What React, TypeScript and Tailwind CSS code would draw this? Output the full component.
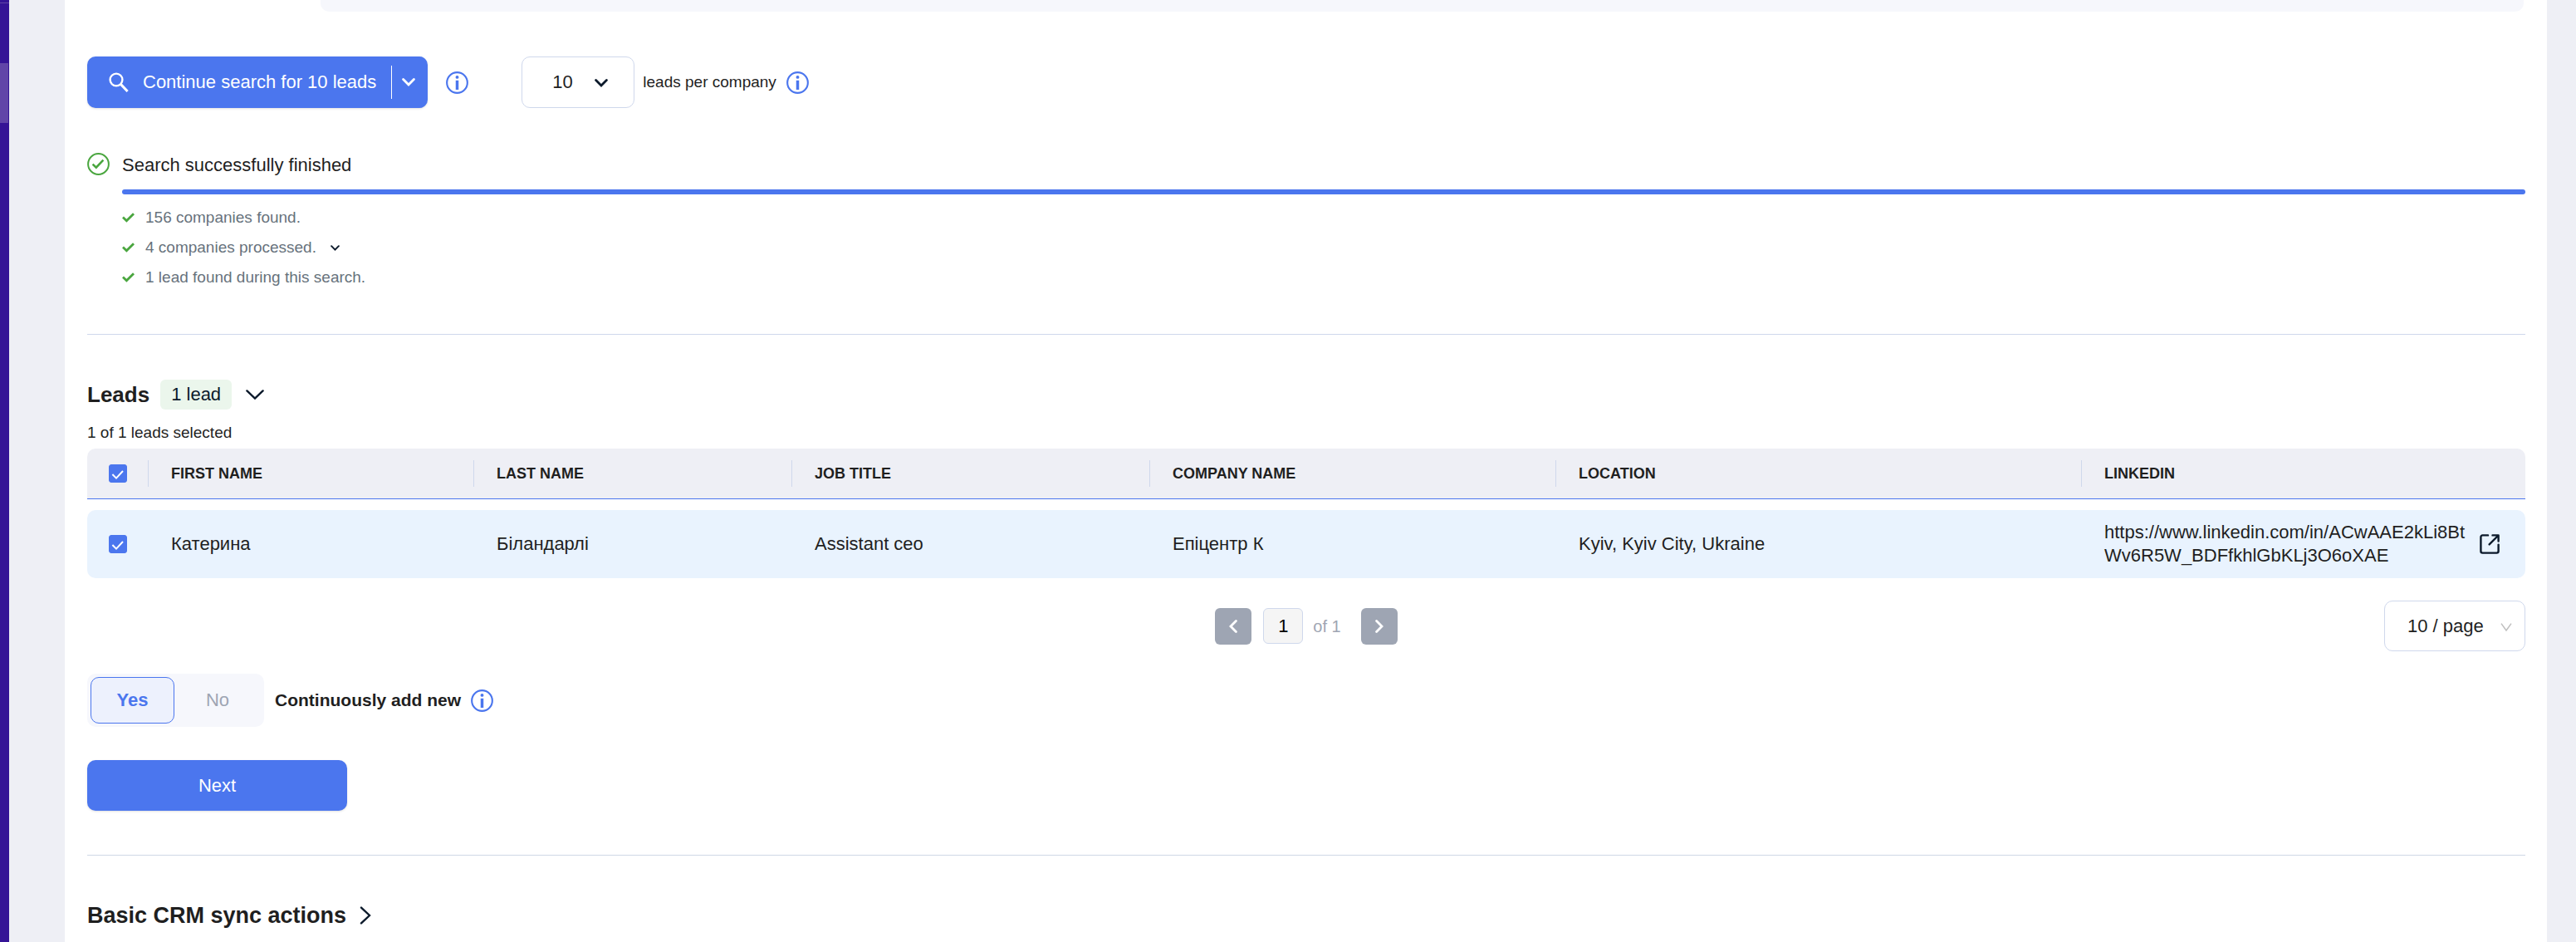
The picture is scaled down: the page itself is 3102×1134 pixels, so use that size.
import { useState } from 'react';
import type { ReactNode } from 'react';

interface Lead {
  firstName: string;
  lastName: string;
  jobTitle: string;
  company: string;
  location: string;
  linkedin: string;
}

const leads: Lead[] = [
  {
    firstName: 'Катерина',
    lastName: 'Біландарлі',
    jobTitle: 'Assistant ceo',
    company: 'Епіцентр К',
    location: 'Kyiv, Kyiv City, Ukraine',
    linkedin: 'https://www.linkedin.com/in/ACwAAE2kLi8BtWv6R5W_BDFfkhlGbKLj3O6oXAE',
  },
];

const columns = [
  { label: 'FIRST NAME', width: 'w-[392px]' },
  { label: 'LAST NAME', width: 'w-[383px]' },
  { label: 'JOB TITLE', width: 'w-[431px]' },
  { label: 'COMPANY NAME', width: 'w-[489px]' },
  { label: 'LOCATION', width: 'w-[633px]' },
  { label: 'LINKEDIN', width: '' },
];

function SearchIcon() {
  return (
    <svg className="h-6 w-6" viewBox="0 0 24 24" fill="none" stroke="currentColor" strokeWidth="2.4" aria-hidden="true">
      <circle cx="9" cy="9" r="7.4" />
      <path d="M14.4 14.4 22.6 23" strokeWidth="3" />
    </svg>
  );
}

function InfoIcon() {
  return (
    <svg className="h-[27px] w-[27px]" viewBox="0 0 28 28" fill="none" stroke="currentColor" aria-hidden="true">
      <circle cx="14" cy="14" r="12.8" strokeWidth="2.2" />
      <path d="M14 11.2v11.6" strokeWidth="3.6" />
      <circle cx="14" cy="7.2" r="2" fill="currentColor" stroke="none" />
    </svg>
  );
}

function InfoButton({ label }: { label: string }) {
  return (
    <button aria-label={label} className="text-[#4b76ee]">
      <InfoIcon />
    </button>
  );
}

function ChevronBold({ className }: { className: string }) {
  return (
    <svg className={className} viewBox="0 0 16 10" fill="none" stroke="currentColor" strokeWidth="2.8" strokeLinecap="round" aria-hidden="true">
      <path d="M1.6 1.6 8 8l6.4-6.4" />
    </svg>
  );
}

function TickIcon() {
  return (
    <svg className="h-3 w-[15px]" viewBox="0 0 15 12" fill="none" stroke="currentColor" strokeWidth="2.8" aria-hidden="true">
      <path d="M1 5.6l4.4 4.2L14 1.2" />
    </svg>
  );
}

function CircleTickIcon() {
  return (
    <svg className="h-[27px] w-[27px] text-[#4aa63f]" viewBox="0 0 27 27" fill="none" stroke="currentColor" aria-hidden="true">
      <circle cx="13.5" cy="13.5" r="12.4" strokeWidth="2" />
      <path d="M6.6 13.6l4.2 4L19.4 8.6" strokeWidth="2.6" />
    </svg>
  );
}

function ExternalIcon() {
  return (
    <svg className="h-6 w-6" viewBox="0 0 24 24" fill="none" stroke="currentColor" strokeWidth="2.4" strokeLinecap="round" strokeLinejoin="round" aria-hidden="true">
      <path d="M10 1.4H3.4a2 2 0 0 0-2 2v17.2a2 2 0 0 0 2 2h17.2a2 2 0 0 0 2-2V12.6" />
      <path d="M15.5 1.4h7.1v7.1M22 2 11.6 12.4" />
    </svg>
  );
}

function Checkbox({ label, checked, onChange }: { label: string; checked: boolean; onChange: () => void }) {
  return (
    <span className="relative mx-auto block h-[22px] w-[22px]">
      <input
        type="checkbox"
        aria-label={label}
        checked={checked}
        onChange={onChange}
        className="block h-[22px] w-[22px] appearance-none rounded-[3px] border border-[#4b76ee] bg-white checked:bg-[#4b76ee]"
      />
      <svg className="pointer-events-none absolute inset-0 h-[22px] w-[22px] text-white" viewBox="0 0 22 22" fill="none" stroke="currentColor" strokeWidth="2" aria-hidden="true">
        <path d="M4.4 12l4.6 4.6 8-8.6" />
      </svg>
    </span>
  );
}

function StatusLine({ children }: { children: ReactNode }) {
  return (
    <li className="flex h-9 items-center gap-[13px] text-[#67727c]">
      <span className="text-[#4aa63f]">
        <TickIcon />
      </span>
      {children}
    </li>
  );
}

export default function App() {
  const [selected, setSelected] = useState(true);
  const [continuous, setContinuous] = useState(true);
  const toggleSelected = () => setSelected(!selected);

  return (
    <div className="flex min-h-screen bg-[#eeeff5] font-['Liberation_Sans',Arial,sans-serif] text-[22px] leading-7 text-[#1f1f1f]">
      <aside className="w-[11px] shrink-0 bg-[#351496]">
        <div className="mt-[3px] h-px bg-[#6145a8]" />
        <div className="mt-[72px] mr-px h-[72px] bg-[#6145a8]" />
      </aside>

      <main className="mr-[35px] ml-[67px] min-w-0 grow bg-white pr-[26px] pl-[27px]">
        <div className="mr-[2px] ml-[281px] h-[14px] rounded-b-[10px] bg-[#f6f7fc]" />

        <section className="mt-[54px] flex h-[62px] items-center">
          <div className="flex h-full items-center rounded-[10px] bg-[#4b76ee] text-white shadow-sm">
            <button className="flex h-full items-center gap-[17px] pr-[18px] pl-[26px]">
              <SearchIcon />
              Continue search for 10 leads
            </button>
            <span className="h-10 w-px bg-white" />
            <button aria-label="Search options" className="flex h-full w-[43px] items-center pl-3">
              <ChevronBold className="h-[10px] w-4" />
            </button>
          </div>
          <div className="ml-[22px] flex">
            <InfoButton label="About search" />
          </div>
          <div className="relative ml-[64px] h-full">
            <select
              id="per-company"
              defaultValue="10"
              className="h-full w-[136px] appearance-none rounded-[10px] border border-[#cfd8ec] bg-white pl-[36px]"
            >
              <option>10</option>
              <option>20</option>
            </select>
            <ChevronBold className="pointer-events-none absolute top-[27px] right-8 h-[10px] w-4 text-[#0c1a2b]" />
          </div>
          <label htmlFor="per-company" className="mr-3 ml-[10px] text-[19px]">
            leads per company
          </label>
          <InfoButton label="About leads per company" />
        </section>

        <section className="mt-[54px] flex items-start gap-[15px]">
          <CircleTickIcon />
          <div className="grow">
            <p className="h-[44px] leading-[30px]">Search successfully finished</p>
            <div className="h-[6px] rounded-full bg-[#4b76ee]" />
            <ul className="mt-[10px] text-[19px]">
              <StatusLine>156 companies found.</StatusLine>
              <StatusLine>
                4 companies processed.
                <button aria-label="Show processed companies" className="ml-1 text-[#0c1a2b]">
                  <ChevronBold className="h-[7px] w-[11px]" />
                </button>
              </StatusLine>
              <StatusLine>1 lead found during this search.</StatusLine>
            </ul>
          </div>
        </section>

        <hr className="mt-[50px] border-[#cfd8ec]" />

        <section className="mt-[54px]">
          <div className="flex h-9 items-center">
            <h2 className="text-[26px] font-bold">Leads</h2>
            <span className="ml-[13px] rounded-md bg-[#ebf6ec] px-[13px] py-1 text-[#0c1a2b]">1 lead</span>
            <button aria-label="Toggle leads" className="ml-[17px]">
              <svg className="h-3 w-[22px] text-[#0c1a2b]" viewBox="0 0 22 12" fill="none" stroke="currentColor" strokeWidth="2.4" strokeLinecap="round">
                <path d="M1.4 1.4 11 10.6l9.6-9.2" />
              </svg>
            </button>
          </div>
          <p className="mt-[14px] h-[33px] text-[19px]">1 of 1 leads selected</p>

          <table className="w-full table-fixed border-separate border-spacing-0 text-left">
            <thead>
              <tr className="h-[61px]">
                <th className="w-[74px] rounded-tl-[10px] border-b border-[#4b76ee] bg-[#eeeff5] p-0">
                  <div className="flex h-8 items-center border-r border-[#cfd8ec]">
                    <Checkbox label="Select all leads" checked={selected} onChange={toggleSelected} />
                  </div>
                </th>
                {columns.map((column) => (
                  <th
                    key={column.label}
                    className={`${column.width} border-b border-[#4b76ee] bg-[#eeeff5] p-0 text-[18px] font-bold last:rounded-tr-[10px] [&:last-child>div]:border-r-0`}
                  >
                    <div className="flex h-8 items-center border-r border-[#cfd8ec] pl-[27px]">{column.label}</div>
                  </th>
                ))}
              </tr>
            </thead>
            <tbody>
              <tr className="h-[13px]" aria-hidden="true">
                <td colSpan={7} className="p-0" />
              </tr>
              {leads.map((lead) => (
                <tr key={lead.linkedin} className="h-[82px] [&>td]:bg-[#e9f3fe]">
                  <td className="rounded-l-[10px] p-0">
                    <Checkbox label={`Select ${lead.firstName}`} checked={selected} onChange={toggleSelected} />
                  </td>
                  <td className="p-0 pl-[27px]">{lead.firstName}</td>
                  <td className="p-0 pl-[27px]">{lead.lastName}</td>
                  <td className="p-0 pl-[27px]">{lead.jobTitle}</td>
                  <td className="p-0 pl-[27px]">{lead.company}</td>
                  <td className="p-0 pl-[27px]">{lead.location}</td>
                  <td className="rounded-r-[10px] p-0 pr-[31px] pl-[27px]">
                    <div className="flex items-center justify-between gap-3">
                      <span className="break-all">{lead.linkedin}</span>
                      <a href="#linkedin" aria-label="Open LinkedIn profile" className="shrink-0 text-[#0c1a2b]">
                        <ExternalIcon />
                      </a>
                    </div>
                  </td>
                </tr>
              ))}
            </tbody>
          </table>

          <div className="mt-[27px] flex h-[61px] items-center">
            <div className="flex-1" />
            <nav aria-label="Pagination" className="flex items-center">
              <button aria-label="Previous page" className="flex h-11 w-11 items-center justify-center rounded-md bg-[#9ea5b3] text-white">
                <ChevronBold className="h-[10px] w-4 rotate-90" />
              </button>
              <input
                aria-label="Page"
                defaultValue="1"
                className="mr-3 ml-[14px] h-[43px] w-12 rounded-md border border-[#cfd8ec] bg-[#f5f5f5] text-center text-black"
              />
              <span className="text-[20px] text-[#9ea5b3]">of 1</span>
              <button aria-label="Next page" className="ml-6 flex h-11 w-11 items-center justify-center rounded-md bg-[#9ea5b3] text-white">
                <ChevronBold className="h-[10px] w-4 -rotate-90" />
              </button>
            </nav>
            <div className="flex h-full flex-1 justify-end">
              <div className="relative h-full">
                <select
                  aria-label="Rows per page"
                  defaultValue="10 / page"
                  className="h-full w-[170px] appearance-none rounded-[10px] border border-[#cfd8ec] bg-white pl-[27px]"
                >
                  <option>10 / page</option>
                  <option>20 / page</option>
                </select>
                <svg className="pointer-events-none absolute top-[27px] right-4 h-[10px] w-[14px] text-[#bfbfbf]" viewBox="0 0 14 10" fill="none" stroke="currentColor" strokeWidth="1.5">
                  <path d="M1 .6 7 9l6-8.4" />
                </svg>
              </div>
            </div>
          </div>
        </section>

        <section className="mt-[27px]">
          <div className="flex items-center">
            <div className="flex h-16 w-[213px] rounded-[10px] bg-[#f6f7fc] p-1">
              <button
                aria-pressed={continuous}
                onClick={() => setContinuous(true)}
                className="h-[56px] w-[101px] rounded-[10px] border border-[#4b76ee] bg-[#edf1fd] font-bold text-[#4b76ee]"
              >
                Yes
              </button>
              <button aria-pressed={!continuous} onClick={() => setContinuous(false)} className="grow text-[#9ea5b3]">
                No
              </button>
            </div>
            <span className="mr-3 ml-[13px] text-[21px] font-bold">Continuously add new</span>
            <InfoButton label="About continuous adding" />
          </div>
          <button className="mt-10 h-[61px] w-[313px] rounded-[10px] bg-[#4b76ee] text-white shadow-sm">Next</button>
        </section>

        <hr className="mt-[53px] border-[#cfd8e6]" />

        <section className="mt-[54px] flex h-9 items-center">
          <h2 className="text-[27px] font-bold">Basic CRM sync actions</h2>
          <button aria-label="Expand CRM sync actions" className="ml-4">
            <svg className="h-[22px] w-[14px] text-[#0c1a2b]" viewBox="0 0 14 22" fill="none" stroke="currentColor" strokeWidth="2.4" strokeLinecap="round">
              <path d="M2 1.6 12 11 2 20.4" />
            </svg>
          </button>
        </section>
      </main>
    </div>
  );
}
